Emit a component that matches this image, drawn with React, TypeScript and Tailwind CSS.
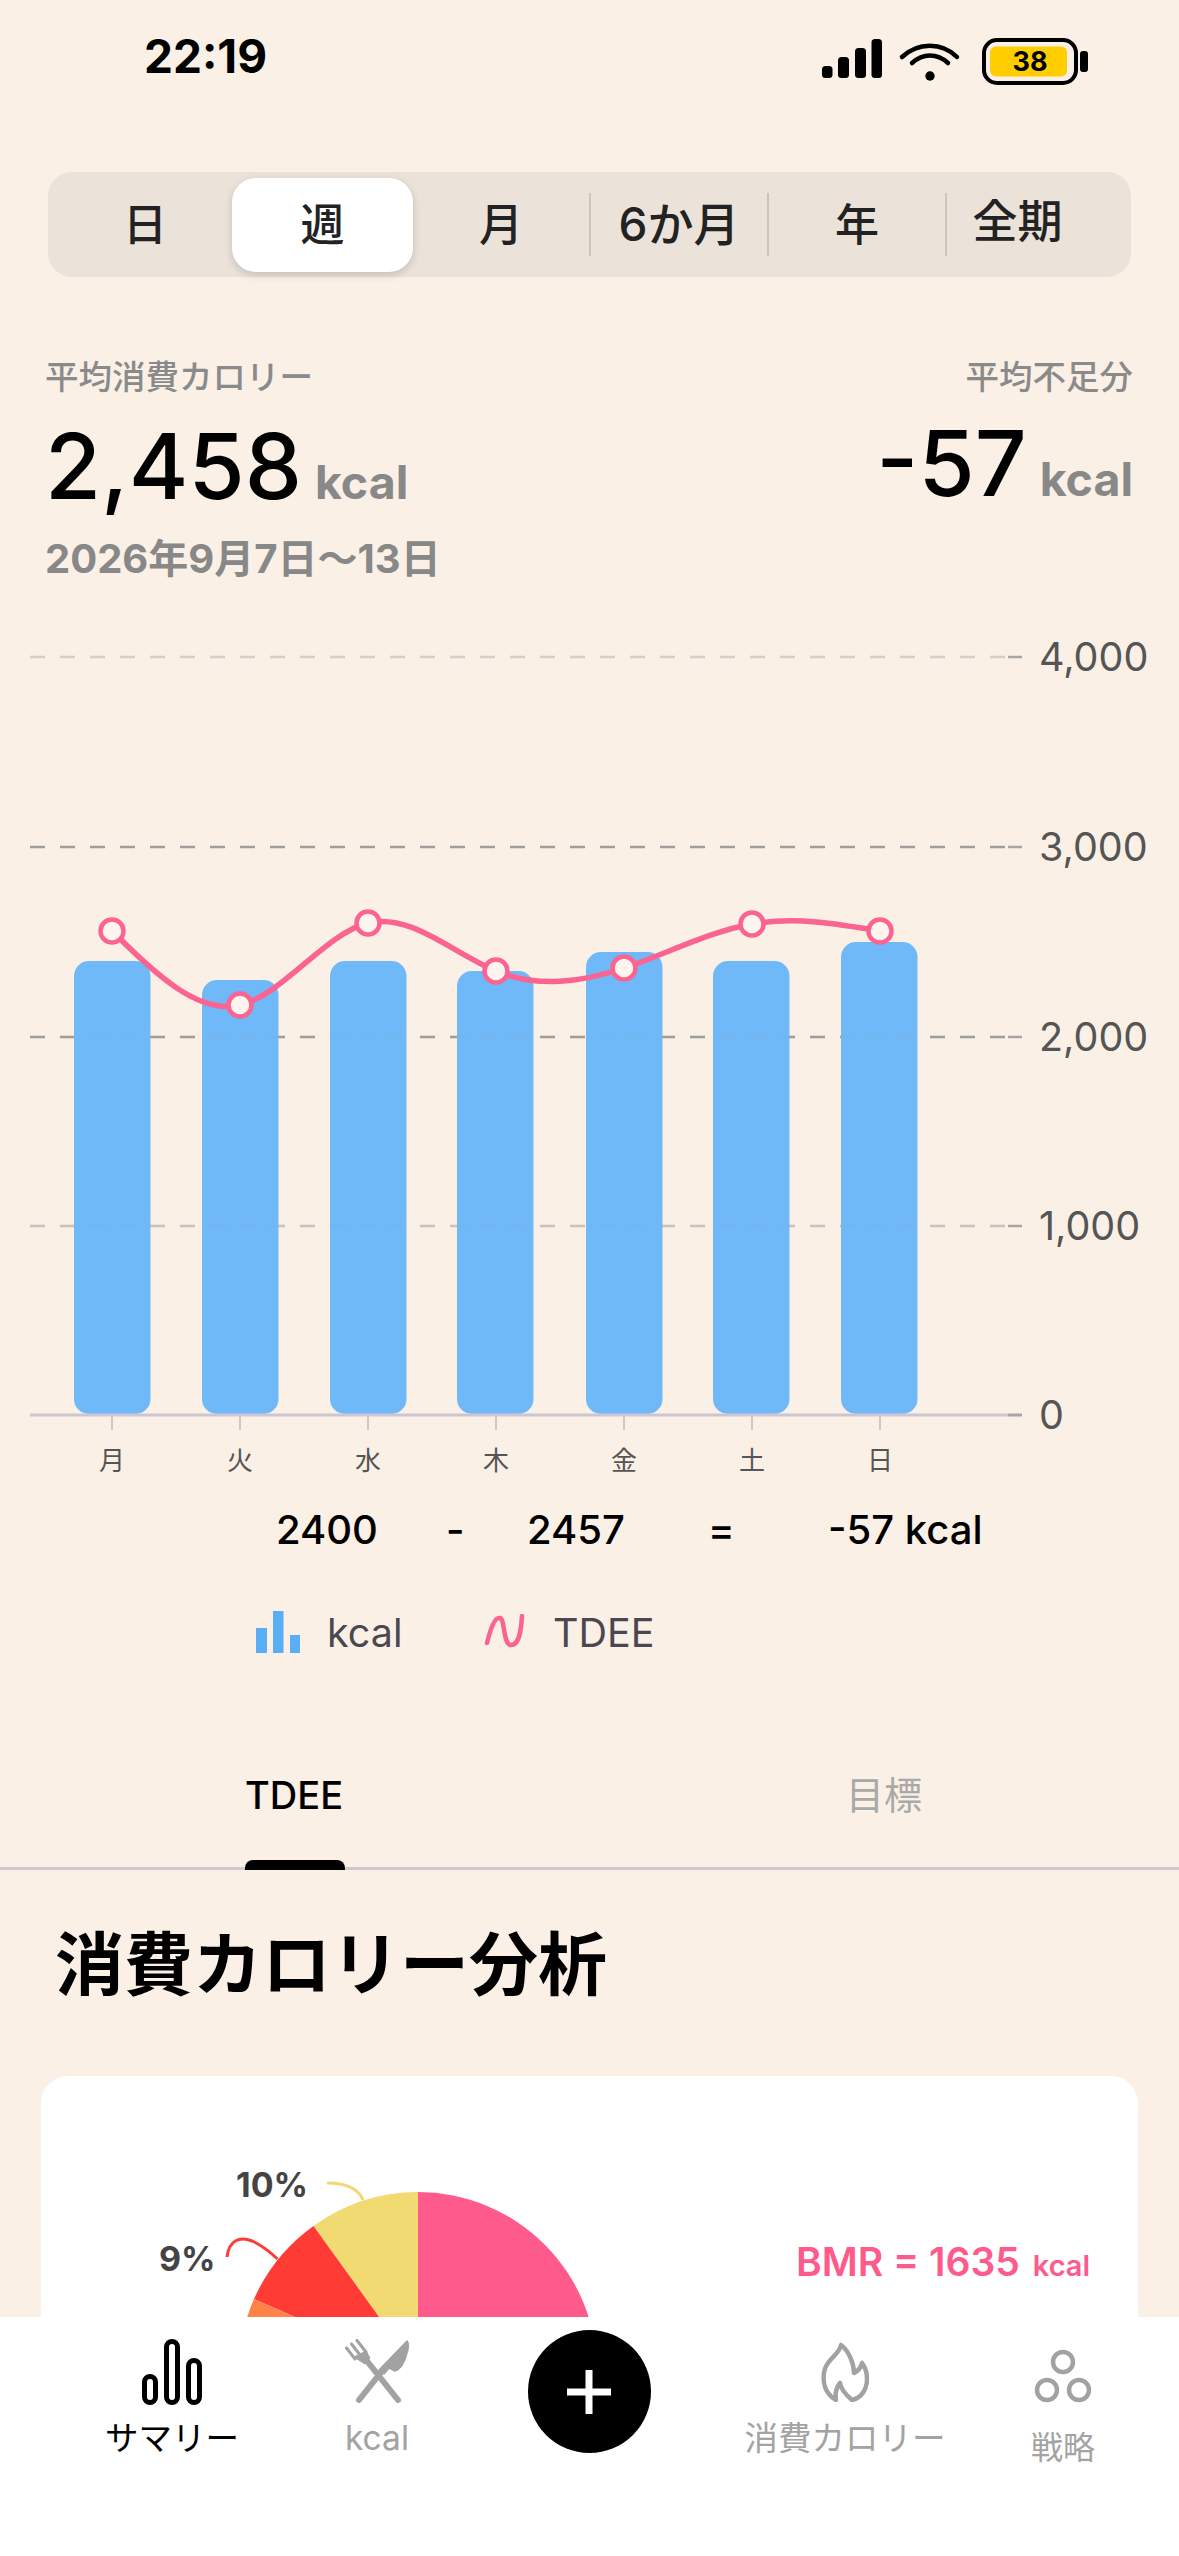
import React from "react";

const FONT = 'Inter, "Noto Sans CJK JP", sans-serif';

const bars = [
  { x: 74, top: 961 },
  { x: 202, top: 980 },
  { x: 330, top: 961 },
  { x: 457, top: 971 },
  { x: 586, top: 952 },
  { x: 713, top: 961 },
  { x: 841, top: 942 },
];
const days = ["月", "火", "水", "木", "金", "土", "日"];
const pts = [
  [112, 931],
  [240, 1005],
  [368, 923],
  [496, 971],
  [624, 968],
  [752, 924],
  [880, 931],
];
const grid = [
  { y: 657, label: "4,000", o: 0.4 },
  { y: 847, label: "3,000", o: 1 },
  { y: 1037, label: "2,000", o: 1 },
  { y: 1226, label: "1,000", o: 0.45 },
];

function controlPoints(x: number[]) {
  const n = x.length - 1;
  const a = new Array(n).fill(0);
  const b = new Array(n).fill(0);
  const r = new Array(n).fill(0);
  a[0] = 0;
  b[0] = 2;
  r[0] = x[0] + 2 * x[1];
  for (let i = 1; i < n - 1; i++) {
    a[i] = 1;
    b[i] = 4;
    r[i] = 4 * x[i] + 2 * x[i + 1];
  }
  a[n - 1] = 2;
  b[n - 1] = 7;
  r[n - 1] = 8 * x[n - 1] + x[n];
  for (let i = 1; i < n; i++) {
    const m = a[i] / b[i - 1];
    b[i] -= m;
    r[i] -= m * r[i - 1];
  }
  a[n - 1] = r[n - 1] / b[n - 1];
  for (let i = n - 2; i >= 0; i--) a[i] = (r[i] - a[i + 1]) / b[i];
  b[n - 1] = (x[n] + a[n - 1]) / 2;
  for (let i = 0; i < n - 1; i++) b[i] = 2 * x[i + 1] - a[i + 1];
  return [a, b];
}

function naturalPath(p: number[][]) {
  const xs = p.map((q) => q[0]);
  const ys = p.map((q) => q[1]);
  const [ax, bx] = controlPoints(xs);
  const [ay, by] = controlPoints(ys);
  let d = `M${xs[0]} ${ys[0]}`;
  for (let i = 0; i < xs.length - 1; i++) {
    d += ` C${ax[i]} ${ay[i]} ${bx[i]} ${by[i]} ${xs[i + 1]} ${ys[i + 1]}`;
  }
  return d;
}

function StatusIcons() {
  return (
    <svg viewBox="820 36 270 50" className="w-[270px] h-[50px] block">
      <rect x="822" y="66" width="10.5" height="12" rx="3.5" fill="#000" />
      <rect x="838" y="57" width="11" height="21" rx="3.5" fill="#000" />
      <rect x="855" y="48" width="11" height="30" rx="3.5" fill="#000" />
      <rect x="871.5" y="39" width="10.5" height="39" rx="3.5" fill="#000" />
      <path d="M902 57 C918 42 942 42 957 57" fill="none" stroke="#000" strokeWidth="4.5" strokeLinecap="round" />
      <path d="M912 63 C923 53 937 53 948 63" fill="none" stroke="#000" strokeWidth="4.5" strokeLinecap="round" />
      <circle cx="930" cy="76" r="4.7" fill="#000" />
      <rect x="984" y="40" width="92" height="43" rx="13" fill="none" stroke="#000" strokeWidth="4" />
      <rect x="990" y="46.5" width="77" height="30" rx="6" fill="#ffcd00" />
      <rect x="1080" y="51" width="8" height="21" rx="3" fill="#000" />
      <text x="1030" y="71" textAnchor="middle" fontFamily="Inter, sans-serif" fontWeight="700" fontSize="27" fill="#000">
        38
      </text>
    </svg>
  );
}

function Chart() {
  return (
    <svg viewBox="0 600 1179 890" className="w-[1179px] h-[890px] block mt-[18px]">
      {grid.map((g) => (
        <g key={g.y}>
          <line x1="30" x2="1012" y1={g.y} y2={g.y} stroke="#a09e9c" strokeWidth="2.5" strokeDasharray="15 15" opacity={g.o} />
          <line x1="1008" x2="1022" y1={g.y} y2={g.y} stroke="#a8a6a4" strokeWidth="2.5" />
          <text x="1039" y={g.y + 14} fontFamily={FONT} fontSize="39.5" fill="#555">
            {g.label}
          </text>
        </g>
      ))}
      {bars.map((b) => (
        <rect key={b.x} x={b.x} y={b.top} width="76.5" height={1414 - b.top} rx="15" fill="#70b9f8" />
      ))}
      {grid.slice(2).map((g) => (
        <line key={g.y} x1="30" x2="1012" y1={g.y} y2={g.y} stroke="#a09e9c" strokeWidth="2.5" strokeDasharray="15 15" opacity="0.14" />
      ))}
      <line x1="30" x2="1008" y1="1415" y2="1415" stroke="#cdc6d2" strokeWidth="3" />
      <line x1="1008" x2="1022" y1="1415" y2="1415" stroke="#a8a6a4" strokeWidth="3" />
      <text x="1039" y="1429" fontFamily={FONT} fontSize="39.5" fill="#555">
        0
      </text>
      {pts.map((p, i) => (
        <g key={p[0]}>
          <line x1={p[0]} x2={p[0]} y1="1416" y2="1430" stroke="#cdc6d2" strokeWidth="2" />
          <text x={p[0]} y="1470" textAnchor="middle" fontFamily={FONT} fontSize="26" fill="#555">
            {days[i]}
          </text>
        </g>
      ))}
      <path d={naturalPath(pts)} fill="none" stroke="#fb6391" strokeWidth="5.5" />
      {pts.map((p) => (
        <circle key={p[0]} cx={p[0]} cy={p[1]} r="11.5" fill="#fdf5ee" stroke="#fb6391" strokeWidth="4.5" />
      ))}
    </svg>
  );
}

function Pie() {
  // page coordinates: the pie is centred on (418, 2371), radius 179
  const cx = 418;
  const cy = 2371;
  const r = 179;
  return (
    <svg viewBox="41 2076 700 500" className="w-[700px] h-[500px] block shrink-0">
      <path d={`M${cx} ${cy} L${cx} ${cy - r} A${r} ${r} 0 0 1 ${cx + r} ${cy} Z`} fill="#ff5a8c" />
      <path d={`M${cx} ${cy} L313.5 2226 A${r} ${r} 0 0 1 ${cx} ${cy - r} Z`} fill="#f1da72" />
      <path d={`M${cx} ${cy} L254 2299 A${r} ${r} 0 0 1 313.5 2226 Z`} fill="#ff3b36" />
      <path d={`M${cx} ${cy} L${cx - r} ${cy} A${r} ${r} 0 0 1 254 2299 Z`} fill="#ff8347" />
      <path d="M327 2183 C345 2183 358 2188 363 2200" fill="none" stroke="#f1da72" strokeWidth="3" />
      <path d="M227 2257 C229 2240 240 2236 252 2241 C261 2245 270 2252 277.5 2259" fill="none" stroke="#ff3b36" strokeWidth="3" />
      <text x="236" y="2197" fontFamily={FONT} fontWeight="700" fontSize="34" fill="#444">
        10%
      </text>
      <text x="159" y="2271" fontFamily={FONT} fontWeight="700" fontSize="34" fill="#444">
        9%
      </text>
    </svg>
  );
}

function SummaryIcon() {
  return (
    <svg viewBox="0 0 60 66" className="w-[60px] h-[66px] block">
      <g fill="none" stroke="#000" strokeWidth="5">
        <rect x="2.5" y="37.5" width="11" height="26" rx="5.5" />
        <rect x="24.5" y="2.5" width="11" height="61" rx="5.5" />
        <rect x="46.5" y="21.5" width="11" height="42" rx="5.5" />
      </g>
    </svg>
  );
}

function ForkKnifeIcon() {
  return (
    <svg viewBox="0 0 64 66" className="w-[64px] h-[66px] block">
      <g fill="#a2a2a2" stroke="#a2a2a2">
        <path d="M62 2 C64 4 63.5 9 62 14 C60 22 56 30 50 32 L44 29 L39 35 L34 31 Z" strokeWidth="1.5" strokeLinejoin="round" />
        <line x1="37" y1="32" x2="14" y2="61" strokeWidth="6" strokeLinecap="round" />
        <line x1="1.5" y1="9" x2="10" y2="20" strokeWidth="3" strokeLinecap="round" />
        <line x1="6.5" y1="5" x2="15" y2="16" strokeWidth="3" strokeLinecap="round" />
        <line x1="12" y1="1.5" x2="21" y2="13" strokeWidth="3" strokeLinecap="round" />
        <path d="M9 18 L21 12 L25 19 L20 25 Z" strokeWidth="1" strokeLinejoin="round" />
        <line x1="22" y1="22" x2="53" y2="61" strokeWidth="6" strokeLinecap="round" />
      </g>
    </svg>
  );
}

function FlameIcon() {
  return (
    <svg viewBox="0 0 48 60" className="w-[48px] h-[60px] block">
      <path
        d="M20 3 C19 10 12 14 7 21 C1 29 1 44 8 52 C10 55 13 57 15 58 C14 52 15 46 19 41 C20 47 25 53 31 58 C40 56 46 48 46 37 C46 30 44 25 41 21 C40 26 37 29 33 31 C33 22 28 9 20 3 Z"
        fill="none"
        stroke="#a2a2a2"
        strokeWidth="4.5"
        strokeLinejoin="round"
      />
    </svg>
  );
}

function CirclesIcon() {
  return (
    <svg viewBox="0 0 58 56" className="w-[58px] h-[56px] block">
      <g fill="none" stroke="#a2a2a2" strokeWidth="4.5">
        <circle cx="29" cy="13" r="10" />
        <circle cx="13" cy="41" r="10" />
        <circle cx="45" cy="41" r="10" />
      </g>
    </svg>
  );
}

export default function App() {
  return (
    <div className="relative w-[1179px] h-[2556px] overflow-hidden bg-[#faf0e6]" style={{ fontFamily: FONT }}>
      {/* status bar */}
      <div className="flex justify-between h-[112px] pl-[144px] pr-[89px]">
        <div className="mt-[29px] text-[46px] leading-[54px] font-bold text-black">22:19</div>
        <div className="mt-[36px]">
          <StatusIcons />
        </div>
      </div>

      {/* range selector */}
      <div className="mt-[60px] mx-[48px] h-[105px] rounded-[24px] bg-[#ebe2da] flex items-center text-[44px] font-medium text-[#222]">
        <div className="w-[184px] pl-[10px] text-center">日</div>
        <div className="w-[181px] h-[94px] flex items-center justify-center rounded-[24px] bg-white shadow-[0_3px_8px_rgba(0,0,0,0.16)]">週</div>
        <div className="w-[176px] text-center">月</div>
        <div className="w-[2px] h-[63px] bg-[#cbc5be]" />
        <div className="w-[176px] text-center text-[46px]">6か月</div>
        <div className="w-[2px] h-[63px] bg-[#cbc5be]" />
        <div className="w-[176px] text-center">年</div>
        <div className="w-[2px] h-[63px] bg-[#cbc5be]" />
        <div className="w-[183px] pr-[42px] text-center -mt-[6px] text-[45px]">全期</div>
      </div>

      {/* averages */}
      <div className="mt-[80px] pl-[45px] pr-[46px] flex justify-between">
        <div>
          <div className="text-[33.5px] leading-[40px] font-medium text-[#8a8a8a]">平均消費カロリー</div>
          <div className="mt-[23px] h-[92px] flex items-baseline gap-[13px] leading-[92px]">
            <span className="text-[91px] font-medium text-black">2,458</span>
            <span className="text-[46.5px] font-bold text-[#888]">kcal</span>
          </div>
          <div className="mt-[24px] text-[40px] leading-[46px] font-bold text-[#888]">2026年9月7日〜13日</div>
        </div>
        <div className="flex flex-col items-end">
          <div className="text-[33.5px] leading-[40px] font-medium text-[#8a8a8a]">平均不足分</div>
          <div className="mt-[20px] h-[92px] flex items-baseline gap-[13px] leading-[92px]">
            <span className="text-[91px] font-medium text-black">-57</span>
            <span className="text-[46.5px] font-bold text-[#888]">kcal</span>
          </div>
        </div>
      </div>

      <Chart />

      {/* equation */}
      <div className="mt-[16px] pl-[276px] flex text-[40px] leading-[48px] font-medium text-black">
        <div className="w-[170px]">2400</div>
        <div className="w-[81px]">-</div>
        <div className="w-[181px]">2457</div>
        <div className="w-[120px]">=</div>
        <div>-57 kcal</div>
      </div>

      {/* legend */}
      <div className="mt-[53px] pl-[256px] flex items-center h-[50px] text-[39.5px] text-[#4a4750]">
        <svg viewBox="0 0 44 42" className="w-[44px] h-[42px] block">
          <rect x="0" y="17" width="11" height="25" fill="#5aaef5" />
          <rect x="17" y="0" width="10.5" height="42" fill="#5aaef5" />
          <rect x="34" y="24" width="10" height="18" fill="#5aaef5" />
        </svg>
        <span className="ml-[27px] mt-[4px] w-[75px]">kcal</span>
        <svg viewBox="484 1612 44 36" className="ml-[82px] w-[44px] h-[36px] block">
          <path d="M487 1641 C491 1625 495 1615 500 1616 C505 1617 503 1643 511 1643 C519 1643 521 1630 522 1614" fill="none" stroke="#fb6391" strokeWidth="4.5" strokeLinecap="round" />
        </svg>
        <span className="ml-[25px] mt-[4px]">TDEE</span>
      </div>

      {/* tabs */}
      <div className="mt-[114px] h-[99px] pl-[245px] flex border-b-[3px] border-[#cfc8d2] text-[38px] leading-[48px]">
        <div className="w-[601px] flex flex-col justify-between">
          <div className="font-medium text-black">TDEE</div>
          <div className="w-[100px] h-[10px] rounded-t-[8px] bg-black -mb-[3px]" />
        </div>
        <div className="text-[#a9a9a9]">目標</div>
      </div>

      <h1 className="mt-[55px] pl-[55px] text-[69px] leading-[80px] font-bold text-black">消費カロリー分析</h1>

      {/* analysis card */}
      <div className="mt-[71px] ml-[41px] w-[1097px] h-[600px] rounded-[27px] bg-white flex">
        <Pie />
        <div className="ml-[55px] mt-[162px] h-[48px] flex items-baseline gap-[13px] leading-[48px] text-[#ff5a8c] font-semibold">
          <span className="text-[39px]">BMR = 1635</span>
          <span className="text-[29px]">kcal</span>
        </div>
      </div>

      {/* tab bar */}
      <div className="absolute left-0 bottom-0 w-[1179px] h-[239px] bg-white pl-[72px] flex text-[33.5px] text-[#a3a3a3]">
        <div className="w-[200px] pt-[22px] flex flex-col items-center">
          <SummaryIcon />
          <div className="mt-[11px] leading-[44px] text-black">サマリー</div>
        </div>
        <div className="w-[210px] pt-[22px] flex flex-col items-center">
          <ForkKnifeIcon />
          <div className="mt-[11px] leading-[44px]">kcal</div>
        </div>
        <div className="w-[214px] pt-[13px] flex justify-center">
          <div className="w-[123px] h-[123px] rounded-full bg-black flex items-center justify-center">
            <svg viewBox="0 0 44 44" className="w-[44px] h-[44px] block">
              <rect x="0" y="18.5" width="44" height="7" fill="#fff" />
              <rect x="18.5" y="0" width="7" height="44" fill="#fff" />
            </svg>
          </div>
        </div>
        <div className="w-[298px] pt-[25px] flex flex-col items-center">
          <FlameIcon />
          <div className="mt-[14px] leading-[44px]">消費カロリー</div>
        </div>
        <div className="w-[138px] pt-[32px] flex flex-col items-center">
          <CirclesIcon />
          <div className="mt-[21px] leading-[44px] text-[32px]">戦略</div>
        </div>
      </div>
    </div>
  );
}
